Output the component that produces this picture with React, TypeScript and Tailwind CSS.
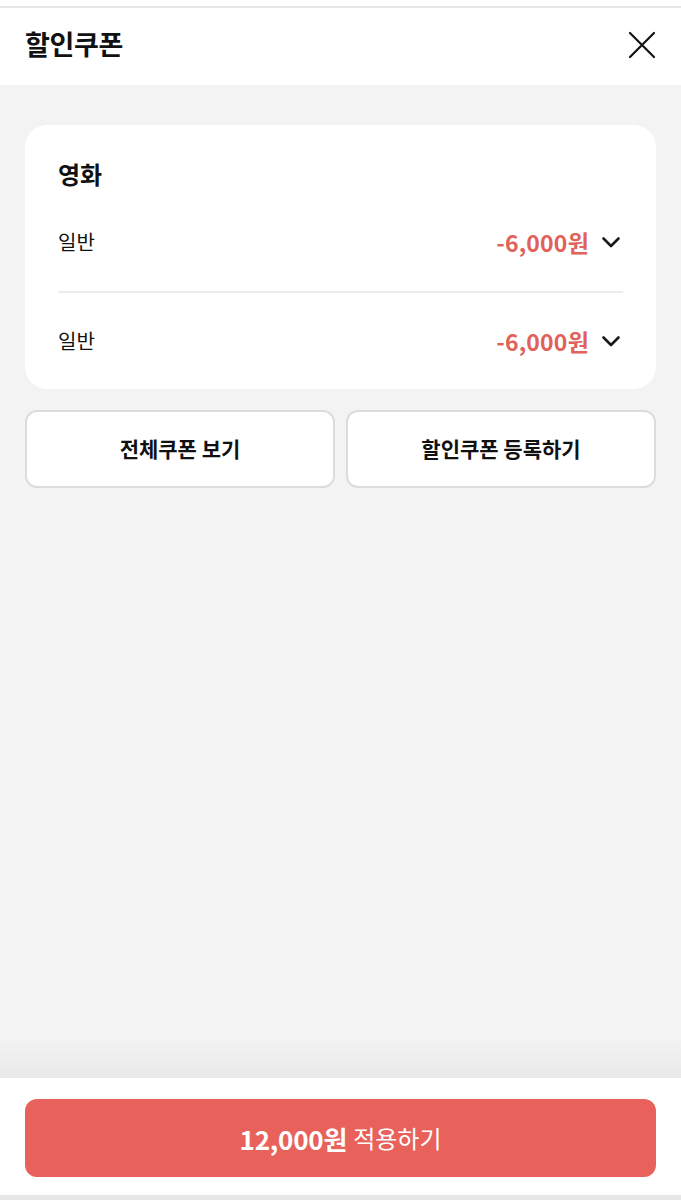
import React from "react";

const Chevron = () => (
  <svg width="24" height="24" viewBox="0 0 24 24" fill="none" stroke="#1a1a1a" strokeWidth="2.6" strokeLinecap="round" strokeLinejoin="round">
    <path d="M4.5 8.5l7.5 7.5 7.5-7.5" />
  </svg>
);

const Row = ({ label, amount }: { label: string; amount: string }) => (
  <div className="flex items-center justify-between h-[50px]">
    <span className="text-[20px] text-[#111]">{label}</span>
    <div className="flex items-center gap-[10px]">
      <span className="text-[23px] font-bold text-[#e0625a] tracking-[0.2px]">{amount}</span>
      <Chevron />
    </div>
  </div>
);

export default function App() {
  return (
    <div
      className="w-[681px] h-[1200px] flex flex-col bg-[#f3f3f3] overflow-hidden"
      style={{ fontFamily: '"Noto Sans CJK KR", "Noto Sans", sans-serif' }}
    >
      <div className="h-[6px] bg-white shrink-0" />
      <div className="h-[2px] bg-[#e6e6e6] shrink-0" />
      <header className="h-[77px] bg-white flex items-center justify-between px-[25px] shrink-0">
        <h1 className="text-[27px] font-bold text-[#111] tracking-[-0.3px] -mt-[4px]">할인쿠폰</h1>
        <svg width="28" height="28" viewBox="0 0 28 28" fill="none" stroke="#111" strokeWidth="2.2" strokeLinecap="round" className="-mt-[4px]">
          <path d="M2 2l24 24M26 2L2 26" />
        </svg>
      </header>
      <main className="flex-1 flex flex-col px-[25px] pt-[40px]">
        <section className="bg-white rounded-[22px] px-[33px] pt-[25px] pb-[23px]">
          <h2 className="text-[24px] font-bold text-[#111] leading-[48px] mb-[19px]">영화</h2>
          <Row label="일반" amount="-6,000원" />
          <div className="h-[2px] bg-[#ededed] mt-[24px] mb-[23px]" />
          <Row label="일반" amount="-6,000원" />
        </section>
        <div className="grid grid-cols-2 gap-[11px] mt-[21px]">
          <button className="h-[78px] bg-white border-2 border-[#dcdcdc] rounded-[12px] text-[21px] font-bold text-[#111]">
            전체쿠폰 보기
          </button>
          <button className="h-[78px] bg-white border-2 border-[#dcdcdc] rounded-[12px] text-[21px] font-bold text-[#111]">
            할인쿠폰 등록하기
          </button>
        </div>
      </main>
      <footer className="relative h-[117px] bg-white shrink-0 px-[25px] pt-[21px]">
        <div className="absolute left-0 right-0 -top-[40px] h-[40px] bg-gradient-to-b from-transparent to-[#e9e9e9] pointer-events-none" />
        <button className="w-full h-[78px] bg-[#e8625b] rounded-[12px] flex items-center justify-center gap-[6px] text-white">
          <span className="text-[26px] font-bold tracking-[-0.2px]">12,000원</span>
          <span className="text-[24px] font-normal">적용하기</span>
        </button>
      </footer>
      <div className="h-[5px] bg-[#e6e6e6] shrink-0" />
    </div>
  );
}
